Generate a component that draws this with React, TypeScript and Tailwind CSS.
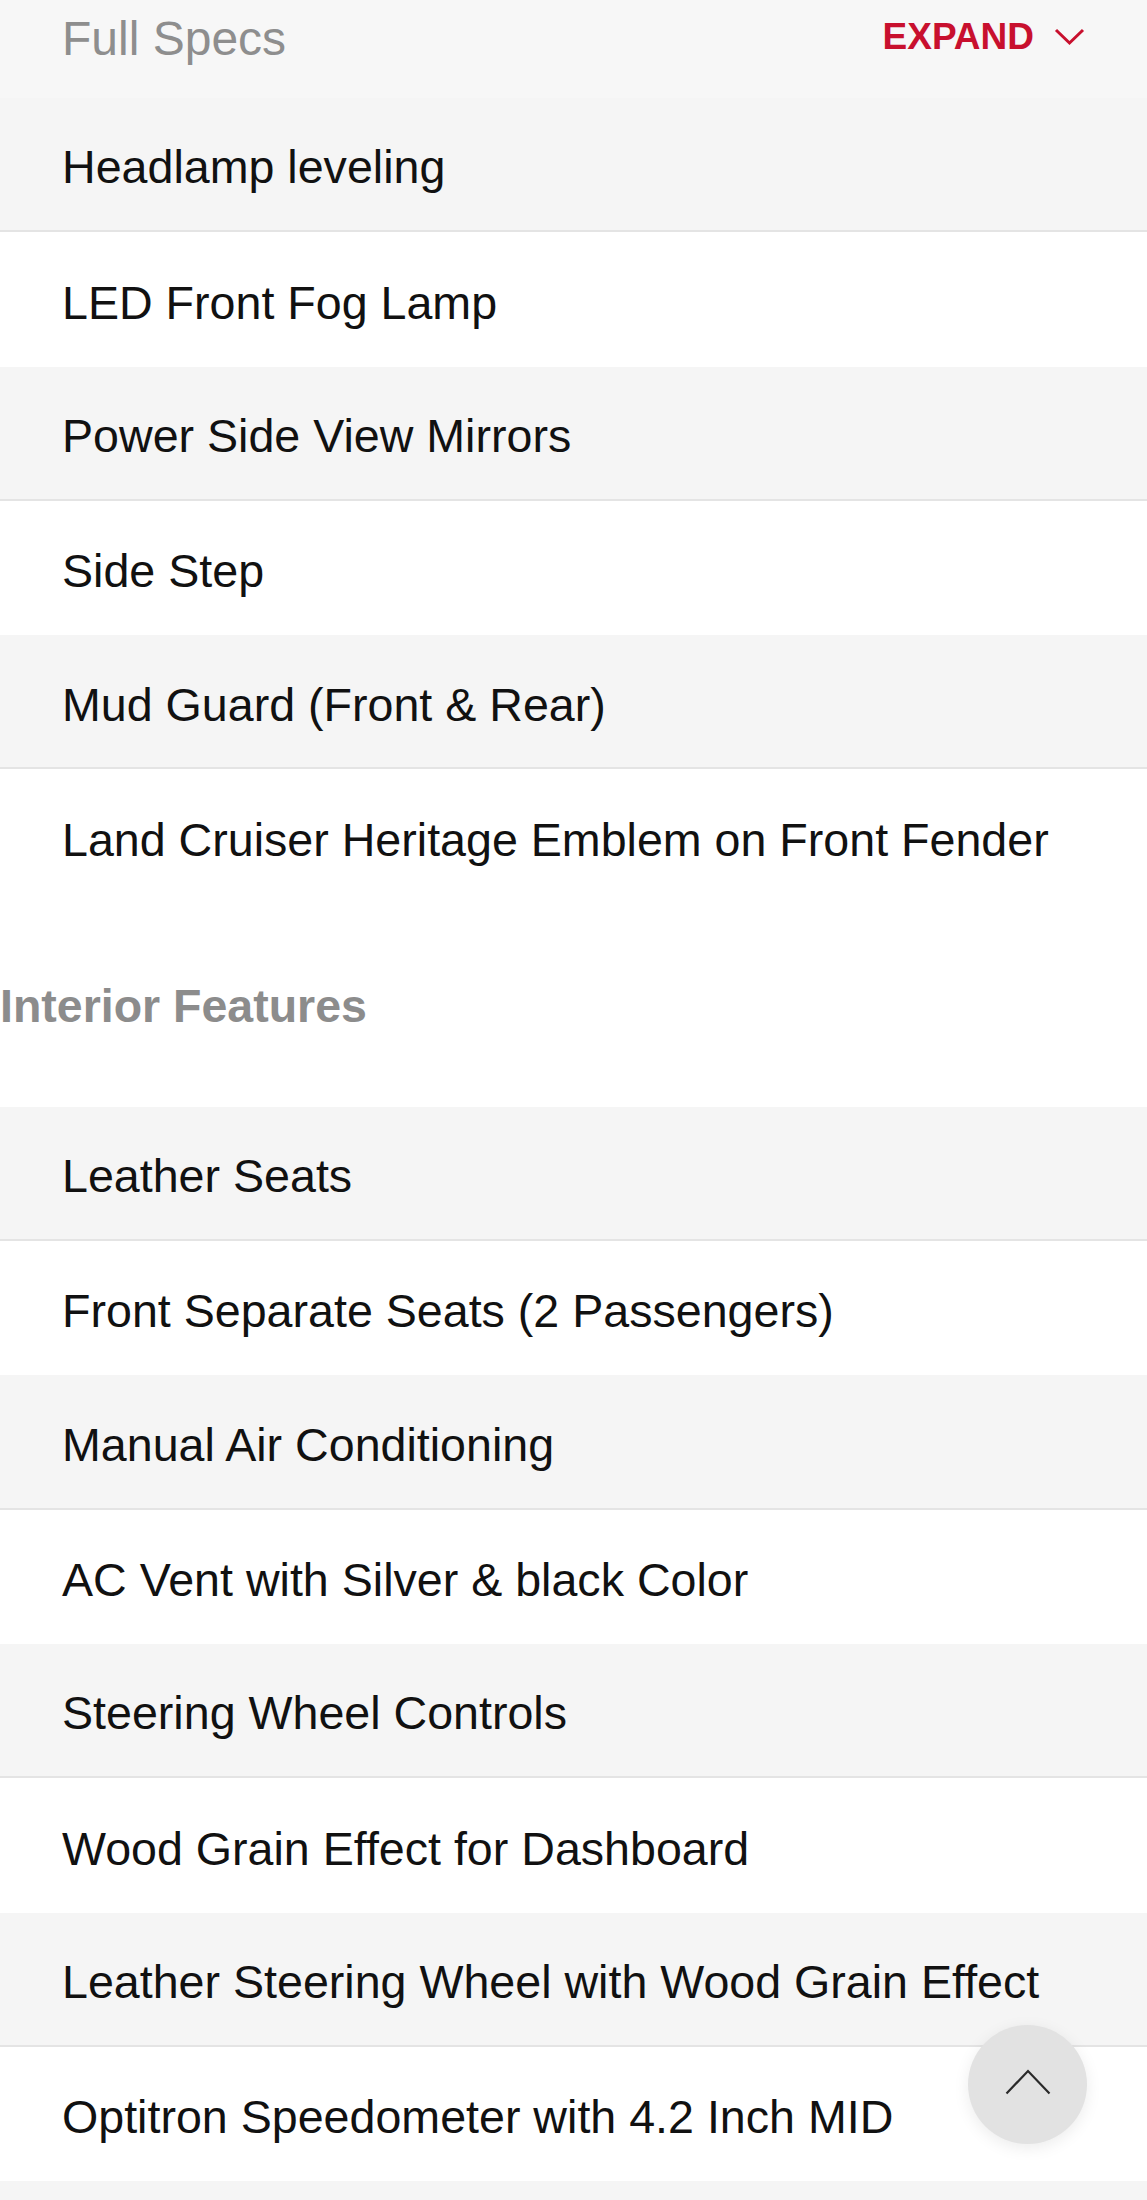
import React from "react";

const exterior = [
  "Headlamp leveling",
  "LED Front Fog Lamp",
  "Power Side View Mirrors",
  "Side Step",
  "Mud Guard (Front & Rear)",
  "Land Cruiser Heritage Emblem on Front Fender",
];

const interior = [
  "Leather Seats",
  "Front Separate Seats (2 Passengers)",
  "Manual Air Conditioning",
  "AC Vent with Silver & black Color",
  "Steering Wheel Controls",
  "Wood Grain Effect for Dashboard",
  "Leather Steering Wheel with Wood Grain Effect",
  "Optitron Speedometer with 4.2 Inch MID",
  "",
];

const SpecRow: React.FC<{ label: string; shaded: boolean }> = ({ label, shaded }) => (
  <div
    className={
      shaded
        ? "h-[134.3px] flex items-center pl-[62px] pt-[7px] bg-[#f5f5f5] border-b-2 border-[#e4e4e4]"
        : "h-[134.3px] flex items-center pl-[62px] pt-[7px] bg-white"
    }
  >
    <span className="text-[46.6px] leading-none text-[#111111] whitespace-nowrap">{label}</span>
  </div>
);

export default function App() {
  return (
    <div className="relative h-[2200px] overflow-hidden bg-white font-['Liberation_Sans',Arial,sans-serif]">
      {/* Header */}
      <div className="h-[98px] bg-[#f7f7f7] flex items-start justify-between pl-[62px] pr-[62px] pt-[15px]">
        <span className="text-[48px] leading-none text-[#8e8e8e]">Full Specs</span>
        <div className="flex items-center gap-[20px] pt-[3px]">
          <span className="text-[37px] leading-none font-bold text-[#c8102e]">EXPAND</span>
          <svg width="31" height="18" viewBox="0 0 31 18" fill="none">
            <path d="M2 2L15.5 15L29 2" stroke="#c8102e" strokeWidth="3" />
          </svg>
        </div>
      </div>

      {/* Exterior */}
      {exterior.map((item, i) => (
        <SpecRow key={item} label={item} shaded={i % 2 === 0} />
      ))}

      {/* Interior Features */}
      <div className="h-[203px] flex items-center pt-[2px]">
        <h3 className="text-[46.5px] leading-none font-bold text-[#8c8c8c]">Interior Features</h3>
      </div>

      {interior.map((item, i) => (
        <SpecRow key={i} label={item} shaded={i % 2 === 0} />
      ))}

      {/* Back to top */}
      <button className="absolute left-[968px] top-[2025px] w-[119px] h-[119px] rounded-full bg-[#e2e2e2] shadow-[0_4px_16px_rgba(0,0,0,0.08)] flex items-center justify-center">
        <svg width="46" height="27" viewBox="0 0 46 27" fill="none" className="-mt-[6px]">
          <path d="M1.5 25.5L23 3L44.5 25.5" stroke="#2a2a2a" strokeWidth="2.2" />
        </svg>
      </button>
    </div>
  );
}
